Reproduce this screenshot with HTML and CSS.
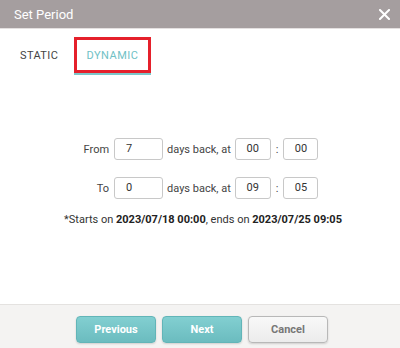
FILE: index.html
```html
<!DOCTYPE html>
<html lang="en">
<head>
    <meta charset="UTF-8">
    <title>Set Period</title>
    <link rel="stylesheet" href="styles.css">
</head>
<body>
    <div class="dialog">
        <div class="dialog-header">
            <span class="dialog-title">Set Period</span>
            <svg class="close-icon" width="11" height="11" viewBox="0 0 11 11">
                <path d="M1 1 L10 10 M10 1 L1 10" stroke="#ffffff" stroke-width="2" stroke-linecap="square"/>
            </svg>
        </div>

        <div class="tabs">
            <div class="tab">STATIC</div>
            <div class="tab-active">
                <div class="tab-highlight">DYNAMIC</div>
            </div>
        </div>

        <div class="dialog-body">
            <div class="period-grid">
                <span class="label">From</span>
                <div class="field field-days">7</div>
                <span>days back, at</span>
                <div class="field field-time">00</div>
                <span class="colon">:</span>
                <div class="field field-time">00</div>

                <span class="label">To</span>
                <div class="field field-days">0</div>
                <span>days back, at</span>
                <div class="field field-time">09</div>
                <span class="colon">:</span>
                <div class="field field-time">05</div>
            </div>

            <p class="summary">*Starts on <strong>2023/07/18 00:00</strong>, ends on <strong>2023/07/25 09:05</strong></p>
        </div>

        <div class="dialog-footer">
            <button class="btn btn-primary">Previous</button>
            <button class="btn btn-primary">Next</button>
            <button class="btn btn-default">Cancel</button>
        </div>
    </div>
</body>
</html>
```

FILE: styles.css
```css
/* Set Period dialog */
body {
    margin: 0;
    font-family: 'Roboto', 'Liberation Sans', sans-serif;
    color: #333;
    background-color: #ffffff;
}

.dialog {
    width: 400px;
    height: 348px;
    display: flex;
    flex-direction: column;
}

.dialog-header {
    height: 28px;
    background-color: #a59e9f;
    border-bottom: 1px solid #e4e0e0;
    display: flex;
    align-items: center;
    justify-content: space-between;
    padding: 0 10px 0 14px;
}

.dialog-title {
    color: #ffffff;
    font-size: 13px;
}

.close-icon {
    margin-top: 1px;
}

.tabs {
    display: flex;
    align-items: flex-start;
    padding: 8px 0 0 20px;
}

.tab {
    font-size: 11px;
    letter-spacing: 0.4px;
    color: #444;
    margin-top: 12px;
    width: 54px;
}

.tab-active {
    border-bottom: 2px solid #7cc6c9;
}

.tab-highlight {
    width: 71px;
    height: 30px;
    border: 3px solid #e5202b;
    display: flex;
    align-items: center;
    justify-content: center;
    font-size: 11px;
    letter-spacing: 0.5px;
    color: #6fc1c5;
}

.dialog-body {
    flex: 1;
    padding-top: 63px;
}

.period-grid {
    display: grid;
    grid-template-columns: auto 49px auto 36px auto 35px;
    column-gap: 4px;
    row-gap: 17px;
    justify-content: center;
    align-items: center;
    font-size: 11px;
    color: #444;
    padding-left: 2px;
}

.label {
    text-align: right;
    margin-right: 1px;
}

.colon {
    padding: 0 1px;
}

.field {
    height: 20px;
    line-height: 20px;
    border: 1px solid #c8c8c8;
    border-radius: 3px;
    background-color: #ffffff;
    font-size: 11px;
    color: #333;
}

.field-days {
    padding-left: 11px;
}

.field-time {
    text-align: center;
}

.summary {
    margin: 14px 0 0;
    text-align: center;
    font-size: 11px;
    color: #333;
    padding-left: 6px;
}

.summary strong {
    color: #222;
}

.dialog-footer {
    height: 44px;
    border-top: 1px solid #e4e2e0;
    background-color: #f4f3f2;
    display: flex;
    justify-content: center;
    align-items: flex-start;
    gap: 6px;
    padding-top: 11px;
    box-sizing: border-box;
    padding-left: 4px;
}

.btn {
    width: 80px;
    height: 27px;
    border-radius: 4px;
    font-family: 'Roboto', 'Liberation Sans', sans-serif;
    font-size: 11px;
    font-weight: bold;
    box-shadow: 0 1px 2px rgba(0, 0, 0, 0.15);
}

.btn-primary {
    background: linear-gradient(#82cfd1, #6bbcbf);
    border: 1px solid #62b5b8;
    color: #ffffff;
}

.btn-default {
    background: linear-gradient(#f8f8f8, #ececec);
    border: 1px solid #b8b8b8;
    color: #777;
}
```
